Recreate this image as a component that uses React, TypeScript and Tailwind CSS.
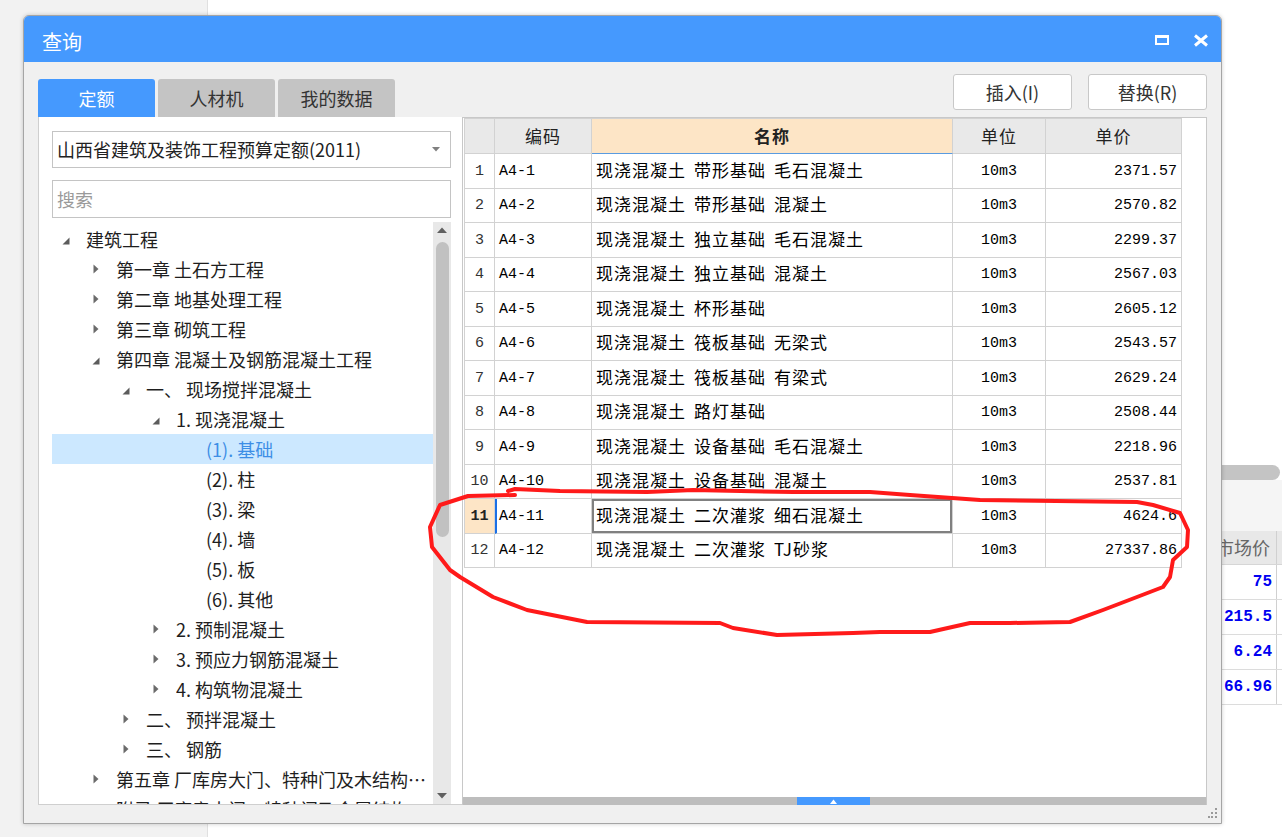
import React from 'react';

const cjk = "font-['Noto_Sans_CJK_SC',sans-serif]";
const mono = "font-['Liberation_Mono','Noto_Sans_CJK_SC',monospace]";

type Node = { lvl: number; icon?: 'open' | 'closed'; text: string; sel?: boolean };

const tree: Node[] = [
  { lvl: 0, icon: 'open', text: '建筑工程' },
  { lvl: 1, icon: 'closed', text: '第一章 土石方工程' },
  { lvl: 1, icon: 'closed', text: '第二章 地基处理工程' },
  { lvl: 1, icon: 'closed', text: '第三章 砌筑工程' },
  { lvl: 1, icon: 'open', text: '第四章 混凝土及钢筋混凝土工程' },
  { lvl: 2, icon: 'open', text: '一、 现场搅拌混凝土' },
  { lvl: 3, icon: 'open', text: '1. 现浇混凝土' },
  { lvl: 4, text: '(1). 基础', sel: true },
  { lvl: 4, text: '(2). 柱' },
  { lvl: 4, text: '(3). 梁' },
  { lvl: 4, text: '(4). 墙' },
  { lvl: 4, text: '(5). 板' },
  { lvl: 4, text: '(6). 其他' },
  { lvl: 3, icon: 'closed', text: '2. 预制混凝土' },
  { lvl: 3, icon: 'closed', text: '3. 预应力钢筋混凝土' },
  { lvl: 3, icon: 'closed', text: '4. 构筑物混凝土' },
  { lvl: 2, icon: 'closed', text: '二、 预拌混凝土' },
  { lvl: 2, icon: 'closed', text: '三、 钢筋' },
  { lvl: 1, icon: 'closed', text: '第五章 厂库房大门、特种门及木结构工程' },
  { lvl: 1, icon: 'closed', text: '附录 厂库房大门、特种门及金属结构件工程' },
];

const indent = ['pl-[6px]', 'pl-[36px]', 'pl-[66px]', 'pl-[96px]', 'pl-[126px]'];

const rows = [
  ['A4-1', '现浇混凝土 带形基础 毛石混凝土', '2371.57'],
  ['A4-2', '现浇混凝土 带形基础 混凝土', '2570.82'],
  ['A4-3', '现浇混凝土 独立基础 毛石混凝土', '2299.37'],
  ['A4-4', '现浇混凝土 独立基础 混凝土', '2567.03'],
  ['A4-5', '现浇混凝土 杯形基础', '2605.12'],
  ['A4-6', '现浇混凝土 筏板基础 无梁式', '2543.57'],
  ['A4-7', '现浇混凝土 筏板基础 有梁式', '2629.24'],
  ['A4-8', '现浇混凝土 路灯基础', '2508.44'],
  ['A4-9', '现浇混凝土 设备基础 毛石混凝土', '2218.96'],
  ['A4-10', '现浇混凝土 设备基础 混凝土', '2537.81'],
  ['A4-11', '现浇混凝土 二次灌浆 细石混凝土', '4624.6'],
  ['A4-12', '现浇混凝土 二次灌浆 TJ砂浆', '27337.86'],
];

function Caret({ kind }: { kind?: 'open' | 'closed' }) {
  if (kind === 'open')
    return (
      <svg width="8" height="8" viewBox="0 0 8 8" className="mt-[4px]">
        <path d="M7.5 0.5V7.5H0.5Z" fill="#5c5c5c" />
      </svg>
    );
  if (kind === 'closed')
    return (
      <svg width="6" height="10" viewBox="0 0 6 10">
        <path d="M0.5 0.5L5.5 5L0.5 9.5Z" fill="#6b6b6b" />
      </svg>
    );
  return null;
}

function TreeRow({ n }: { n: Node }) {
  return (
    <div
      className={`h-[30px] flex items-center pr-[6px] ${indent[n.lvl]} ${
        n.sel ? 'bg-[#cce8ff] text-[#3d8ee6]' : 'text-[#1e1e1e]'
      }`}
    >
      <div className="w-[16px] flex justify-center shrink-0">
        <Caret kind={n.icon} />
      </div>
      <span className="ml-[12px] text-[18px] whitespace-pre truncate">{n.text}</span>
    </div>
  );
}

function NameText({ text }: { text: string }) {
  return (
    <div className="flex gap-[8px] text-[17px] tracking-[1px] text-black pb-[3px]">
      {text.split(' ').map((w, i) => (
        <span key={i}>{w}</span>
      ))}
    </div>
  );
}

function DataTable() {
  return (
    <div className="w-[718px] border-l border-t border-[#d2d2d2]">
      <div className="h-[35px] flex bg-[#e9e9e9] text-[17px] tracking-[1px] text-[#222]">
        <div className="w-[30px] border-r border-b border-[#d2d2d2]" />
        <div className="w-[97px] border-r border-b border-[#d2d2d2] flex items-center justify-center">编码</div>
        <div className="w-[361px] border-r border-b border-b-[#5a9be0] border-r-[#d2d2d2] bg-[#fde5c6] flex items-center justify-center font-bold">
          名称
        </div>
        <div className="w-[93px] border-r border-b border-[#d2d2d2] flex items-center justify-center">单位</div>
        <div className="w-[136px] border-r border-b border-[#d2d2d2] flex items-center justify-center">单价</div>
      </div>
      {rows.map((r, i) => {
        const cur = i === 10;
        return (
          <div key={r[0]} className={`flex bg-white ${i % 2 === 0 ? 'h-[35px]' : 'h-[34px]'}`}>
            <div
              className={`w-[30px] border-r border-b border-[#d2d2d2] flex items-center justify-center pt-[2px] text-[15px] ${mono} ${
                cur ? 'bg-[#fde5c6] font-bold text-[#222]' : 'text-[#333]'
              }`}
            >
              {i + 1}
            </div>
            <div
              className={`w-[97px] border-r border-b border-[#d2d2d2] flex items-center pt-[2px] text-[15px] text-black ${mono} ${
                cur ? 'border-l-2 border-l-[#1a6fe6] pl-[2px]' : 'pl-[4px]'
              }`}
            >
              {r[0]}
            </div>
            <div
              className={`w-[361px] border-r border-b border-[#d2d2d2] flex items-center pl-[4px] ${
                cur ? 'shadow-[inset_0_0_0_2px_#808080]' : ''
              }`}
            >
              <NameText text={r[1]} />
            </div>
            <div className={`w-[93px] border-r border-b border-[#d2d2d2] flex items-center justify-center pt-[2px] text-[15px] text-black ${mono}`}>
              10m3
            </div>
            <div className={`w-[136px] border-r border-b border-[#d2d2d2] flex items-center justify-end pr-[4px] pt-[2px] text-[15px] text-black ${mono}`}>
              {r[2]}
            </div>
          </div>
        );
      })}
    </div>
  );
}

export default function App() {
  return (
    <div className={`relative w-[1282px] h-[837px] overflow-hidden flex bg-white ${cjk}`}>
      {/* desktop behind the dialog */}
      <div className="w-[208px] h-full bg-[#f2f2f2] border-r border-[#e0e0e0]" />
      <div className="flex-1 h-full bg-white" />
      <div className="w-[60px] h-full flex flex-col bg-white">
        <div className="h-[465px]" />
        <div className="h-[15px] w-[58px] rounded-r-full bg-[#c4c4c4]" />
        <div className="h-[51px] bg-[#f5f5f5]" />
        <div className="h-[34px] flex bg-[#e8e8e8] border-b border-[#d6d6d6]">
          <div className="w-[55px] border-r border-[#d0d0d0] flex items-center justify-end pr-[6px] text-[18px] text-[#666] whitespace-nowrap">
            市场价
          </div>
        </div>
        {['75', '215.5', '6.24', '66.96'].map((v) => (
          <div key={v} className="h-[35px] flex border-b border-[#dcdcdc]">
            <div className={`w-[55px] border-r border-[#d0d0d0] flex items-center justify-end pr-[4px] text-[16px] font-bold text-[#0000f0] ${mono}`}>
              {v}
            </div>
          </div>
        ))}
      </div>

      {/* dialog */}
      <div className="absolute left-[23px] top-[15px] w-[1199px] h-[809px] border border-[#a5a5a5] rounded-t-[6px] bg-[#f0f0f0] flex flex-col overflow-hidden shadow-[0_0_4px_rgba(0,0,0,0.2)]">
        <div className="h-[46px] shrink-0 bg-[#4599fe] flex items-center pl-[18px] pr-[12px]">
          <span className="text-[20px] text-white pt-[6px]">查询</span>
          <div className="ml-auto flex items-center gap-[24px] pt-[2px]">
            <svg width="14" height="10" viewBox="0 0 14 10">
              <rect x="1" y="1.5" width="12" height="7.5" fill="none" stroke="white" strokeWidth="2" />
              <rect x="0" y="0" width="14" height="3" fill="white" />
            </svg>
            <svg width="16" height="13" viewBox="0 0 16 13">
              <path d="M2 1.5L14 11.5M14 1.5L2 11.5" stroke="white" strokeWidth="3" />
            </svg>
          </div>
        </div>

        <div className="flex-1 flex flex-col px-[14px]">
          <div className="h-[55px] flex items-end">
            <div className="flex gap-[3px]">
              <div className="w-[117px] h-[38px] rounded-t-[3px] bg-[#4599fe] text-white text-[18px] flex items-center justify-center">
                定额
              </div>
              <div className="w-[117px] h-[38px] rounded-t-[3px] bg-[#c4c4c4] text-[#333] text-[18px] flex items-center justify-center">
                人材机
              </div>
              <div className="w-[117px] h-[38px] rounded-t-[3px] bg-[#c4c4c4] text-[#333] text-[18px] flex items-center justify-center">
                我的数据
              </div>
            </div>
            <div className="ml-auto self-start mt-[12px] flex gap-[16px]">
              <button className="w-[119px] h-[36px] bg-white border border-[#c8c8c8] rounded-[3px] text-[18px] text-[#333]">
                插入(I)
              </button>
              <button className="w-[119px] h-[36px] bg-white border border-[#c8c8c8] rounded-[3px] text-[18px] text-[#333]">
                替换(R)
              </button>
            </div>
          </div>

          <div className="h-[688px] flex">
            {/* left: library + tree */}
            <div className="w-[424px] bg-white border-l border-b border-[#cfcfcf] flex flex-col pl-[13px] pt-[14px]">
              <div className="w-[399px] h-[37px] border border-[#c4c4c4] flex items-center pl-[4px] pr-[10px] text-[18px] text-[#222]">
                <span>山西省建筑及装饰工程预算定额(2011)</span>
                <svg width="8" height="5" viewBox="0 0 8 5" className="ml-auto">
                  <path d="M0 0H8L4 4.5Z" fill="#808080" />
                </svg>
              </div>
              <div className="w-[399px] h-[38px] mt-[12px] border border-[#c4c4c4] flex items-center pl-[4px] text-[18px] text-[#9a9a9a]">
                搜索
              </div>
              <div className="flex-1 mt-[4px] flex min-h-0">
                <div className="w-[381px] pt-[2px] overflow-hidden">
                  {tree.map((n) => (
                    <TreeRow key={n.text} n={n} />
                  ))}
                </div>
                <div className="w-[18px] bg-[#e8e8e8] flex flex-col items-center pt-[5px] pb-[5px]">
                  <svg width="10" height="6" viewBox="0 0 10 6">
                    <path d="M0 6H10L5 0.5Z" fill="#606060" />
                  </svg>
                  <div className="mt-[9px] w-[13px] h-[295px] rounded-full bg-[#c1c1c1]" />
                  <svg width="10" height="6" viewBox="0 0 10 6" className="mt-auto">
                    <path d="M0 0H10L5 5.5Z" fill="#606060" />
                  </svg>
                </div>
              </div>
            </div>

            {/* right: quota table */}
            <div className="flex-1 bg-white border-l border-r border-t border-[#c8c8c8] flex flex-col">
              <div className="flex-1 pl-[1px]">
                <DataTable />
              </div>
              <div className="h-[8px] bg-[#bdbdbd] flex">
                <div className="ml-[334px] w-[73px] bg-[#4599fe] flex items-center justify-center">
                  <svg width="7" height="5" viewBox="0 0 7 5">
                    <path d="M0 5H7L3.5 0.5Z" fill="white" />
                  </svg>
                </div>
              </div>
            </div>
          </div>
        </div>

        <div className="h-[18px] shrink-0 flex justify-end items-end pr-[3px] pb-[3px]">
          <svg width="10" height="12" viewBox="0 0 10 12">
            <rect x="7" y="0" width="2" height="2" fill="#9a9a9a" />
            <rect x="7" y="4" width="2" height="2" fill="#9a9a9a" />
            <rect x="3" y="4" width="2" height="2" fill="#9a9a9a" />
            <rect x="7" y="8" width="2" height="2" fill="#9a9a9a" />
            <rect x="3" y="8" width="2" height="2" fill="#9a9a9a" />
            <rect x="0" y="8" width="2" height="2" fill="#9a9a9a" />
          </svg>
        </div>
      </div>

      {/* hand-drawn annotation */}
      <svg className="absolute left-0 top-0 pointer-events-none" width="1282" height="837" viewBox="0 0 1282 837">
        <path
          d="M508 491 L515 489 L560 491 L647 492 L693 490 L793 492 L870 492 L910 495 L980 500 L1137 502 L1153 505 L1180 513 L1188 530 L1187 547 L1173 560 L1170 577 L1163 587 L1137 597 L1103 610 L1070 622 L1010 623 L970 623 L930 632 L880 632 L853 633 L777 635 L733 628 L720 623 L587 622 L527 610 L493 597 L460 577 L450 570 L432 547 L430 527 L440 505 L468 496 L515 495"
          fill="none"
          stroke="#ff1a1a"
          strokeWidth="4"
          strokeLinejoin="round"
          strokeLinecap="round"
        />
      </svg>
    </div>
  );
}
